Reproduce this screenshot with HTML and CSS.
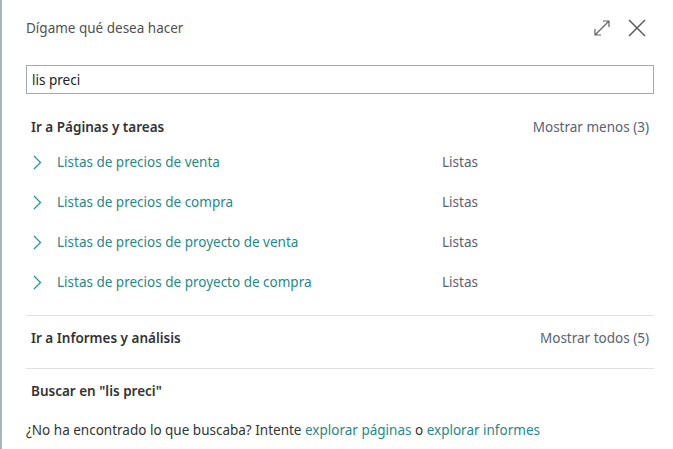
FILE: index.html
```html
<!DOCTYPE html>
<html lang="es">
<head>
  <meta charset="UTF-8">
  <title>Dígame qué desea hacer</title>
  <link rel="stylesheet" href="styles.css">
</head>
<body>
  <div class="dialog">
    <div class="header">
      <span class="title">Dígame qué desea hacer</span>
      <div class="tools">
        <!-- expand -->
        <svg class="icon" width="18" height="18" viewBox="0 0 18 18">
          <path d="M2 16 L16 2 M10 2 H16 V8 M2 10 V16 H8" fill="none" stroke="#616161" stroke-width="1.2"/>
        </svg>
        <!-- close -->
        <svg class="icon" width="20" height="20" viewBox="0 0 20 20">
          <path d="M2 2 L18 18 M18 2 L2 18" fill="none" stroke="#5a5a5a" stroke-width="1.5"/>
        </svg>
      </div>
    </div>

    <input class="search" type="text" value="lis preci">

    <div class="group first">
      <div class="group-head">
        <span class="group-title">Ir a Páginas y tareas</span>
        <a class="more">Mostrar menos (3)</a>
      </div>
      <ul class="results">
        <li><svg class="chev" width="9" height="15" viewBox="0 0 9 15"><path d="M1 1 L7.5 7.5 L1 14" fill="none" stroke="#2a8f8f" stroke-width="1.2"/></svg><a class="link">Listas de precios de venta</a><span class="kind">Listas</span></li>
        <li><svg class="chev" width="9" height="15" viewBox="0 0 9 15"><path d="M1 1 L7.5 7.5 L1 14" fill="none" stroke="#2a8f8f" stroke-width="1.2"/></svg><a class="link">Listas de precios de compra</a><span class="kind">Listas</span></li>
        <li><svg class="chev" width="9" height="15" viewBox="0 0 9 15"><path d="M1 1 L7.5 7.5 L1 14" fill="none" stroke="#2a8f8f" stroke-width="1.2"/></svg><a class="link">Listas de precios de proyecto de venta</a><span class="kind">Listas</span></li>
        <li><svg class="chev" width="9" height="15" viewBox="0 0 9 15"><path d="M1 1 L7.5 7.5 L1 14" fill="none" stroke="#2a8f8f" stroke-width="1.2"/></svg><a class="link">Listas de precios de proyecto de compra</a><span class="kind">Listas</span></li>
      </ul>
    </div>

    <div class="group bordered">
      <div class="group-head">
        <span class="group-title">Ir a Informes y análisis</span>
        <a class="more">Mostrar todos (5)</a>
      </div>
    </div>

    <div class="group bordered">
      <div class="group-head">
        <span class="group-title">Buscar en "lis preci"</span>
      </div>
    </div>

    <p class="hint">¿No ha encontrado lo que buscaba? Intente <a class="link">explorar páginas</a> o <a class="link">explorar informes</a></p>
  </div>
</body>
</html>
```

FILE: styles.css
```css
html, body {
  margin: 0;
  height: 100%;
}
body {
  background: #a9b5b8;
  padding-left: 2px;
  font-family: "Noto Sans", "Open Sans", sans-serif;
  font-size: 13.5px;
  color: #333;
}
.dialog {
  background: #fff;
  min-height: 100%;
  padding: 0 19px 0 24px;
  box-sizing: border-box;
}
.header {
  display: flex;
  justify-content: space-between;
  align-items: center;
  height: 56px;
}
.title {
  color: #505050;
}
.tools {
  display: flex;
  align-items: center;
  gap: 16px;
  margin-right: 7px;
}
.icon {
  display: block;
}
.search {
  display: block;
  width: 100%;
  height: 29px;
  margin-top: 9px;
  box-sizing: border-box;
  border: 1px solid #a4a9b0;
  padding: 0 5px;
  font-family: inherit;
  font-size: 13.5px;
  color: #222;
}
.group {
  padding: 4px 5px 12px;
}
.group.first {
  padding: 17px 5px 13px;
}
.group.bordered {
  border-top: 1px solid #e1e1e1;
}
.group-head {
  display: flex;
  justify-content: space-between;
  align-items: center;
  height: 36px;
}
.first .group-head {
  height: 31px;
}
.group-title {
  font-weight: 600;
  color: #333;
}
.more {
  color: #5a6270;
}
.results {
  list-style: none;
  margin: 0;
  padding: 0;
}
.results li {
  display: flex;
  align-items: center;
  height: 40px;
}
.chev {
  display: block;
  margin: 0 15px 0 2px;
}
.link {
  color: #1f8a8a;
}
.results .link {
  width: 385px;
}
.kind {
  color: #5a6270;
}
.hint {
  margin: 0;
  color: #333;
}
```
